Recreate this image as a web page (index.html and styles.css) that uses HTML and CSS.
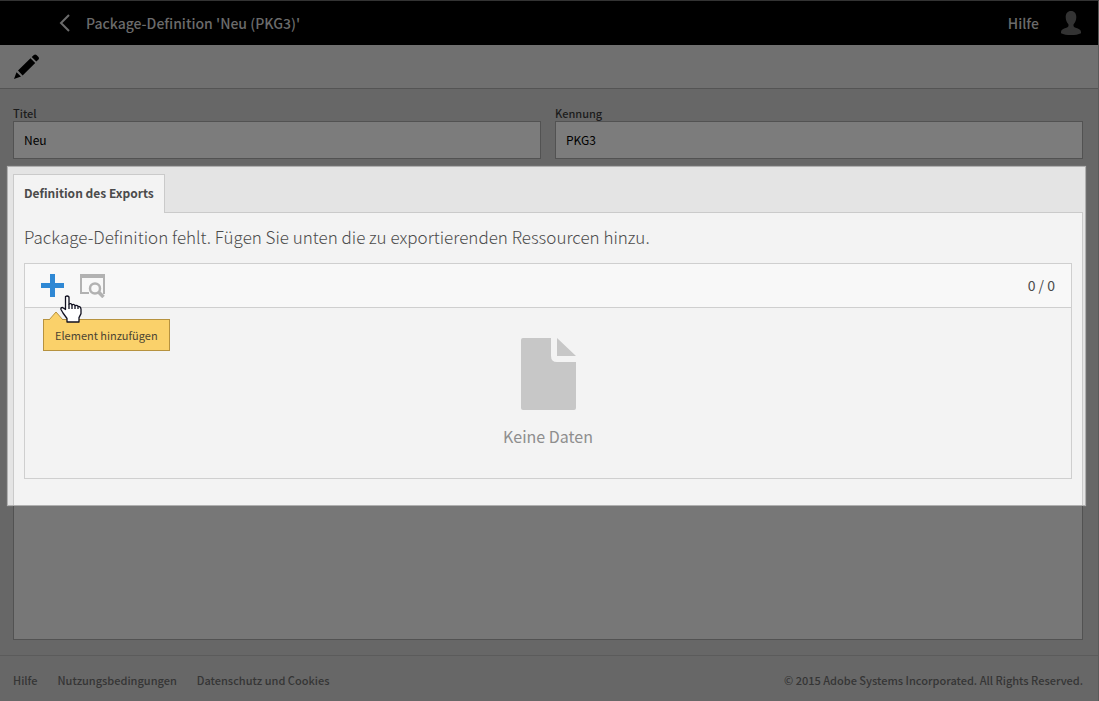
FILE: index.html
```html
<!DOCTYPE html>
<html lang="de">
<head>
<meta charset="utf-8">
<title>Package-Definition</title>
<link rel="stylesheet" href="styles.css">
</head>
<body>
<header class="topbar">
  <a class="back" href="#" aria-label="Zurück"><svg width="12" height="18" viewBox="0 0 12 18"><path d="M10 1 2 9l8 8" fill="none" stroke="currentColor" stroke-width="2"/></svg></a>
  <h1 class="title">Package-Definition 'Neu (PKG3)'</h1>
  <a class="help" href="#">Hilfe</a>
  <button class="user" type="button" aria-label="Benutzer"><svg width="20" height="24" viewBox="0 0 20 24"><path d="M10 0c3.400 0 5.300 2.600 5.300 6 0 3-1 5.500-2.700 7.200-.5 1.900.2 3 2 3.600C18 17.800 20 18.800 20 21v1.200C17.500 23.600 14 24 10 24S2.500 23.600 0 22.200V21c0-2.200 2-3.200 5.400-4.200 1.800-.6 2.500-1.700 2-3.600C5.700 11.500 4.700 9 4.700 6 4.700 2.600 6.600 0 10 0z" fill="currentColor"/></svg></button>
</header>
<div class="toolbar">
  <button class="edit" type="button" aria-label="Bearbeiten"><svg width="26" height="26" viewBox="0 0 26 26"><path d="M0 25 2.500 18.200 7 22.600z M4 16.500 16.500 4.300l4.700 4.600L8.600 21.400z M17.700 3.100 19.900.9q1.300-1 2.600 0l2 2q1 1.300 0 2.500l-2.200 2.200z" fill="currentColor"/></svg></button>
</div>
<main class="content">
  <form class="fields">
    <div class="field"><label for="titel">Titel</label><input id="titel" type="text" value="Neu"></div>
    <div class="field"><label for="kennung">Kennung</label><input id="kennung" type="text" value="PKG3"></div>
  </form>
  <section class="spotlight">
    <div class="tabs" role="tablist"><button class="tab" type="button" role="tab" aria-selected="true">Definition des Exports</button></div>
    <div class="panel">
      <p class="intro">Package-Definition fehlt. Fügen Sie unten die zu exportierenden Ressourcen hinzu.</p>
      <div class="list">
        <div class="list-bar">
          <button class="add" type="button" aria-label="Element hinzufügen"><svg width="23" height="23" viewBox="0 0 23 23"><path d="M9 0h5v9h9v5h-9v9H9v-9H0V9h9z" fill="currentColor"/></svg></button>
          <button class="preview" type="button" aria-label="Vorschau"><svg width="25" height="24" viewBox="0 0 25 24"><path d="M0 0h25v20h-2V4H2v14h7v2H0z" fill="currentColor"/><circle cx="15" cy="14.500" r="5" fill="#f8f8f8" stroke="currentColor" stroke-width="2.500"/><path d="m18.500 18 5 5" stroke="currentColor" stroke-width="3.500"/></svg></button>
          <span class="count">0 / 0</span>
          <div class="tooltip" role="tooltip">Element hinzufügen<svg class="tip" width="16" height="9" viewBox="0 0 16 9"><path d="M1 9 8 1l7 8" fill="#fad16a" stroke="#b6923f"/></svg></div>
          <svg class="pointer" width="22" height="28" viewBox="0 0 22 28"><path d="M5.500 1.500q2-1.300 3.500.5v7q1.800-1.200 3 .8 2-1 3 .8 2-.8 3 .8 2.500-.3 3 2.600v4.600l-2 4V27H7v-3.500L3 18l-2-3.500q-.5-2 1.500-2l3 2z" fill="#fff" stroke="#101020" stroke-width="1.300" stroke-linejoin="round"/><path d="M9 9v5M12 10v4M15 11v3M18 12v2" stroke="#101020" stroke-width="1.300"/></svg>
        </div>
        <div class="empty">
          <svg width="55" height="72" viewBox="0 0 55 72"><path d="M2 0h28v18q0 6 6 6h19v46q0 2-2 2H2q-2 0-2-2V2q0-2 2-2z M36 0l19 18H36z" fill="#c7c7c7"/></svg>
          <p class="empty-text">Keine Daten</p>
        </div>
      </div>
    </div>
  </section>
  <div class="panel-rest"></div>
</main>
<footer class="footer">
  <a href="#">Hilfe</a><a href="#">Nutzungsbedingungen</a><a href="#">Datenschutz und Cookies</a>
  <span class="copyright">© 2015 Adobe Systems Incorporated. All Rights Reserved.</span>
</footer>
</body>
</html>
```
FILE: styles.css
```css
* { box-sizing: border-box; }
body {
  margin: 0;
  min-height: 100vh;
  display: flex;
  flex-direction: column;
  background: #676767;
  border-top: 1px solid #333;
  border-right: 1px solid #5a5a5a;
  font: 12px/16px "Noto Sans CJK SC", "Noto Sans", sans-serif;
  color: #1c1c1c;
}
h1, p { margin: 0; font-weight: normal; }
svg { display: block; }
a { color: inherit; text-decoration: none; }
button { padding: 0; border: 0; background: none; font: inherit; color: inherit; }

.topbar {
  display: flex;
  align-items: center;
  height: 44px;
  padding: 0 17px 0 59px;
  background: #000;
  color: #6b6b6b;
}
.title, .help { font-size: 14px; line-height: 20px; font-weight: 500; }
.title { margin-left: 15px; }
.help { margin-left: auto; }
.user { margin-left: 22px; color: #333; }

.toolbar {
  display: flex;
  align-items: center;
  height: 44px;
  padding: 0 14px;
  background: #707070;
  border-bottom: 1px solid #545454;
  color: #000;
}

.content { flex: 1; display: flex; flex-direction: column; }
.fields { display: flex; gap: 14px; padding: 16px 15px 0 13px; }
.field { flex: 1; display: flex; flex-direction: column; }
.field label { font-size: 11px; font-weight: 500; }
.field input {
  height: 38px;
  width: 100%;
  padding: 0 10px 2px;
  border: 1px solid #525252;
  border-radius: 0;
  background: #7c7c7c;
  color: #000;
  font: inherit;
}

.spotlight {
  margin: 7px 12px 0 7px;
  padding: 7px 2px 0 5px;
  border: 1px solid #b0b0b0;
  background: #e4e4e4;
  box-shadow: 0 0 1px #999;
}
.tabs { display: flex; }
.tab {
  height: 39px;
  margin-bottom: -1px;
  padding: 0 10px 2px;
  border: 1px solid #cacaca;
  border-bottom: 0;
  background: #f3f3f3;
  color: #4b4b4b;
  font-weight: 700;
  position: relative;
}
.panel {
  padding: 12px 10px 26px;
  border: 1px solid #cacaca;
  border-bottom: 0;
  background: #f3f3f3;
}
.intro { font-size: 17px; line-height: 24px; font-weight: 300; color: #4b4b4b; }
.list { margin-top: 14px; border: 1px solid #cfcfcf; }
.list-bar {
  position: relative;
  display: flex;
  align-items: center;
  height: 44px;
  padding: 0 16px;
  background: #f8f8f8;
  border-bottom: 1px solid #cfcfcf;
}
.add { color: #2f88d4; }
.preview { margin-left: 16px; color: #b2b2b2; }
.count { margin-left: auto; padding-bottom: 2px; font-size: 14px; color: #4b4b4b; }
.tooltip {
  position: absolute;
  left: 18px;
  top: 55px;
  padding: 7px 11px;
  border: 1px solid #b6923f;
  background: #fad16a;
  color: #4b4432;
  font-size: 11px;
}
.tip { position: absolute; left: 4px; top: -9px; }
.pointer { position: absolute; left: 35px; top: 31px; }
.empty { display: flex; flex-direction: column; align-items: center; padding: 30px 0 30px; }
.empty-text { margin-top: 14px; font-size: 16px; line-height: 24px; color: #8e8e8e; }

.panel-rest {
  flex: 1;
  margin: 0 15px 15px 13px;
  border: 1px solid #525252;
  border-top: 0;
  background: #777;
}
.footer {
  display: flex;
  align-items: center;
  gap: 20px;
  height: 46px;
  padding: 2px 15px 0 13px;
  border-top: 1px solid #5b5b5b;
  color: #353535;
  font-size: 11px;
  font-weight: 500;
}
.copyright { margin-left: auto; }
```
